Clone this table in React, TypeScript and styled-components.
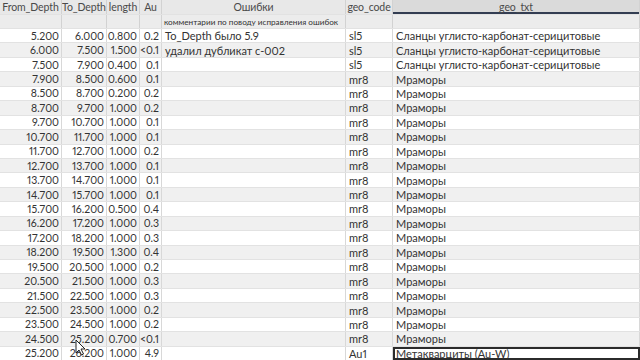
import React from 'react';
import styled, { createGlobalStyle } from 'styled-components';

const GlobalStyle = createGlobalStyle`
  html, body {
    margin: 0;
    padding: 0;
    background: #ffffff;
    overflow: hidden;
  }
  body {
    font-family: Lato, 'Open Sans', sans-serif;
  }
`;

const COLS = '62px 45px 33px 22px 184px 47px 1fr';

const Sheet = styled.div`
  position: relative;
  width: 640px;
  height: 360px;
  overflow: hidden;
  background: #ffffff;
  color: #333;
  font-size: 11px;
`;

const Row = styled.div<{ $height: number; $bg: string }>`
  display: grid;
  grid-template-columns: ${COLS};
  height: ${({ $height }) => $height}px;
  background: ${({ $bg }) => $bg};
  border-bottom: 1px solid #e2e2e2;
  box-sizing: border-box;
`;

const HeadCell = styled.div<{ $active?: boolean }>`
  display: flex;
  align-items: center;
  justify-content: center;
  border-right: 1px solid #d2d2d2;
  color: #4a4a4a;
  font-size: 10.5px;
  letter-spacing: -0.1px;
  white-space: nowrap;
  overflow: hidden;
  background: ${({ $active }) => ($active ? '#dadada' : 'transparent')};
  box-shadow: ${({ $active }) => ($active ? 'inset 0 -2px 0 #333d52' : 'none')};
`;

const NoteCell = styled.div`
  display: flex;
  align-items: center;
  padding-left: 2px;
  border-right: 1px solid #d2d2d2;
  font-size: 8.2px;
  color: #333;
  white-space: nowrap;
  overflow: hidden;
`;

const Cell = styled.div<{ $num?: boolean; $selected?: boolean }>`
  display: flex;
  align-items: center;
  justify-content: ${({ $num }) => ($num ? 'flex-end' : 'flex-start')};
  padding: 0 ${({ $num }) => ($num ? '2px' : '3px')};
  border-right: 1px solid #d8d8d8;
  font-size: ${({ $num }) => ($num ? '10.5px' : '11px')};
  font-variant-numeric: proportional-nums;
  white-space: nowrap;
  overflow: hidden;
  box-sizing: border-box;
  outline: ${({ $selected }) => ($selected ? '2px solid #2b2b2b' : 'none')};
  outline-offset: -2px;
`;

const Cursor = styled.svg`
  position: absolute;
  left: 75px;
  top: 339px;
  width: 11px;
  height: 17px;
`;

type Rec = [string, string, string, string, string, string, string];

const slate = 'Сланцы углисто-карбонат-серицитовые';
const marble = 'Мраморы';

const rows: Rec[] = [
  ['5.200', '6.000', '0.800', '0.2', 'To_Depth было 5.9', 'sl5', slate],
  ['6.000', '7.500', '1.500', '<0.1', 'удалил дубликат с-002', 'sl5', slate],
  ['7.500', '7.900', '0.400', '0.1', '', 'sl5', slate],
  ['7.900', '8.500', '0.600', '0.1', '', 'mr8', marble],
  ['8.500', '8.700', '0.200', '0.2', '', 'mr8', marble],
  ['8.700', '9.700', '1.000', '0.2', '', 'mr8', marble],
  ['9.700', '10.700', '1.000', '0.1', '', 'mr8', marble],
  ['10.700', '11.700', '1.000', '0.1', '', 'mr8', marble],
  ['11.700', '12.700', '1.000', '0.2', '', 'mr8', marble],
  ['12.700', '13.700', '1.000', '0.1', '', 'mr8', marble],
  ['13.700', '14.700', '1.000', '0.1', '', 'mr8', marble],
  ['14.700', '15.700', '1.000', '0.1', '', 'mr8', marble],
  ['15.700', '16.200', '0.500', '0.4', '', 'mr8', marble],
  ['16.200', '17.200', '1.000', '0.3', '', 'mr8', marble],
  ['17.200', '18.200', '1.000', '0.3', '', 'mr8', marble],
  ['18.200', '19.500', '1.300', '0.4', '', 'mr8', marble],
  ['19.500', '20.500', '1.000', '0.2', '', 'mr8', marble],
  ['20.500', '21.500', '1.000', '0.3', '', 'mr8', marble],
  ['21.500', '22.500', '1.000', '0.3', '', 'mr8', marble],
  ['22.500', '23.500', '1.000', '0.2', '', 'mr8', marble],
  ['23.500', '24.500', '1.000', '0.2', '', 'mr8', marble],
  ['24.500', '25.200', '0.700', '<0.1', '', 'mr8', marble],
  ['25.200', '26.200', '1.000', '4.9', '', 'Au1', 'Метакварциты (Au-W)'],
];

const headers = ['From_Depth', 'To_Depth', 'length', 'Au', 'Ошибки', 'geo_code', 'geo_txt'];

const App: React.FC = () => {
  return (
    <Sheet>
      <GlobalStyle />
      <Row $height={15} $bg="#e8e8e8">
        {headers.map((h) => (
          <HeadCell key={h} $active={h === 'geo_txt'}>
            {h}
          </HeadCell>
        ))}
      </Row>
      <Row $height={14} $bg="#ececec">
        <NoteCell />
        <NoteCell />
        <NoteCell />
        <NoteCell />
        <NoteCell>комментарии по поводу исправления ошибок</NoteCell>
        <NoteCell />
        <NoteCell />
      </Row>
      {rows.map((r, i) => {
        const last = i === rows.length - 1;
        return (
          <Row key={i} $height={14.45} $bg={i % 2 === 1 ? '#f0f0f0' : '#ffffff'}>
            <Cell $num>{r[0]}</Cell>
            <Cell $num>{r[1]}</Cell>
            <Cell $num>{r[2]}</Cell>
            <Cell $num>{r[3]}</Cell>
            <Cell>{r[4]}</Cell>
            <Cell>{r[5]}</Cell>
            <Cell $selected={last}>{r[6]}</Cell>
          </Row>
        );
      })}
      <Cursor viewBox="0 0 11 17">
        <path
          d="M1 1 L1 14 L4 11 L6.5 16 L8.5 15 L6 10 L10 10 Z"
          fill="#ffffff"
          stroke="#222"
          strokeWidth="1"
          strokeLinejoin="round"
        />
      </Cursor>
    </Sheet>
  );
};

export default App;
